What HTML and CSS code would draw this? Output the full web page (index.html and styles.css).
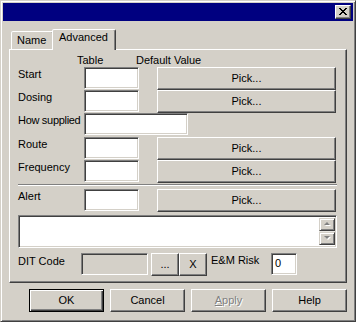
FILE: index.html
```html
<!DOCTYPE html>
<html lang="en">
<head>
    <meta charset="UTF-8">
    <title>Advanced</title>
    <link rel="stylesheet" href="styles.css">
</head>
<body>
    <div class="window">
        <div class="titlebar">
            <span class="close">
                <svg width="8" height="7" viewBox="0 0 8 7" shape-rendering="crispEdges"><path fill="#000" d="M0 0h2v1h-2z M6 0h2v1h-2z M1 1h2v1h-2z M5 1h2v1h-2z M2 2h4v1h-4z M3 3h2v1h-2z M2 4h4v1h-4z M1 5h2v1h-2z M5 5h2v1h-2z M0 6h2v1h-2z M6 6h2v1h-2z"/></svg>
            </span>
        </div>
        <div class="client">
            <div class="tabs">
                <div class="tab">Name</div>
                <div class="tab active">Advanced</div>
            </div>
            <div class="panel">
                <div class="header">
                    <span class="hdr-table">Table</span>
                    <span>Default Value</span>
                </div>
                <div class="row">
                    <span class="label">Start</span>
                    <span class="input table-input"></span>
                    <span class="btn pick">Pick...</span>
                </div>
                <div class="row">
                    <span class="label">Dosing</span>
                    <span class="input table-input"></span>
                    <span class="btn pick">Pick...</span>
                </div>
                <div class="row row-tall">
                    <span class="label narrow">How supplied</span>
                    <span class="input wide-input"></span>
                </div>
                <div class="row">
                    <span class="label">Route</span>
                    <span class="input table-input"></span>
                    <span class="btn pick">Pick...</span>
                </div>
                <div class="row">
                    <span class="label">Frequency</span>
                    <span class="input table-input"></span>
                    <span class="btn pick">Pick...</span>
                </div>
                <div class="sep"></div>
                <div class="row">
                    <span class="label">Alert</span>
                    <span class="input table-input"></span>
                    <span class="btn pick">Pick...</span>
                </div>
                <div class="memo">
                    <div class="memo-text"></div>
                    <div class="scroll">
                        <span class="scroll-btn">
                            <svg width="7" height="5" viewBox="0 0 7 5"><path fill="#fff" d="M4 1l3 3h-6z"/><path fill="#808080" d="M3 0l3 3h-6z"/></svg>
                        </span>
                        <span class="scroll-track"></span>
                        <span class="scroll-btn">
                            <svg width="7" height="5" viewBox="0 0 7 5"><path fill="#fff" d="M1 1h6l-3 3z"/><path fill="#808080" d="M0 0h6l-3 3z"/></svg>
                        </span>
                    </div>
                </div>
                <div class="row dit-row">
                    <span class="label dit-label">DIT Code</span>
                    <span class="input dit-input"></span>
                    <span class="btn small-btn dots">...</span>
                    <span class="btn small-btn">X</span>
                    <span class="label risk-label">E&amp;M Risk</span>
                    <span class="input risk-input">0</span>
                </div>
            </div>
            <div class="buttons">
                <span class="btn dlg-btn default">OK</span>
                <span class="btn dlg-btn">Cancel</span>
                <span class="btn dlg-btn disabled"><u>A</u>pply</span>
                <span class="btn dlg-btn">Help</span>
            </div>
        </div>
    </div>
</body>
</html>
```

FILE: styles.css
```css
* {
    box-sizing: border-box;
}
body {
    margin: 0;
    font-family: "Liberation Sans", Arial, sans-serif;
    font-size: 11px;
    line-height: 13px;
    color: #000;
    background: #d4d0c8;
}
.window {
    width: 356px;
    height: 322px;
    padding: 2px;
    background: #d4d0c8;
    border: 1px solid;
    border-color: #d4d0c8 #404040 #404040 #d4d0c8;
    box-shadow: inset 1px 1px #fff, inset -1px -1px #808080;
    display: flex;
    flex-direction: column;
}
.titlebar {
    height: 18px;
    background: #000080;
    display: flex;
    justify-content: flex-end;
    align-items: center;
    padding-right: 2px;
}
.close {
    width: 16px;
    height: 14px;
    background: #d4d0c8;
    border: 1px solid;
    border-color: #fff #404040 #404040 #fff;
    box-shadow: inset -1px -1px #808080;
    display: flex;
    justify-content: center;
    align-items: center;
    padding: 0 1px 1px 0;
}
.close svg {
    display: block;
}
.client {
    flex: 1;
    padding: 0 6px;
    display: flex;
    flex-direction: column;
}
.tabs {
    height: 20px;
    margin-top: 8px;
    padding-left: 2px;
    display: flex;
    align-items: flex-end;
}
.tab {
    width: 43px;
    height: 18px;
    padding: 2px 0 0 5px;
    background: #d4d0c8;
    border: 1px solid;
    border-bottom: 0;
    border-color: #fff #404040 transparent #fff;
    border-radius: 2px 2px 0 0;
    box-shadow: inset -1px 0 #808080;
}
.tab.active {
    position: relative;
    z-index: 1;
    width: 64px;
    height: 21px;
    margin: 0 -2px -1px -2px;
    padding: 1px 0 0 6px;
}
.panel {
    height: 234px;
    padding: 4px 9px 0 8px;
    border: 1px solid;
    border-color: #fff #404040 #404040 #fff;
    box-shadow: inset -1px -1px #808080;
}
.header {
    height: 13px;
    display: flex;
}
.hdr-table {
    width: 59px;
    margin-left: 59px;
}
.row {
    height: 23px;
    display: flex;
    align-items: flex-start;
}
.row-tall {
    height: 24px;
}
.label {
    width: 66px;
    padding-top: 1px;
    white-space: nowrap;
}
.narrow {
    letter-spacing: -0.3px;
}
.input {
    height: 22px;
    background: #fff;
    border: 1px solid;
    border-color: #808080 #fff #fff #808080;
    box-shadow: inset 1px 1px #404040, inset -1px -1px #d4d0c8;
}
.table-input {
    width: 55px;
}
.wide-input {
    width: 104px;
}
.btn {
    height: 23px;
    background: #d4d0c8;
    border: 1px solid;
    border-color: #fff #404040 #404040 #fff;
    box-shadow: inset -1px -1px #808080;
    display: flex;
    justify-content: center;
    align-items: center;
}
.pick {
    width: 179px;
    margin-left: 18px;
}
.sep {
    height: 2px;
    margin: 1px 0 3px;
    border-top: 1px solid #808080;
    border-bottom: 1px solid #fff;
}
.memo {
    height: 33px;
    margin-top: 3px;
    padding: 2px 1px 2px 2px;
    background: #fff;
    border: 1px solid;
    border-color: #808080 #fff #fff #808080;
    box-shadow: inset 1px 1px #404040, inset -1px -1px #d4d0c8;
    display: flex;
}
.memo-text {
    flex: 1;
}
.scroll {
    width: 16px;
    display: flex;
    flex-direction: column;
}
.scroll-btn {
    height: 13px;
    background: #d4d0c8;
    border: 1px solid;
    border-color: #d4d0c8 #404040 #404040 #d4d0c8;
    box-shadow: inset 1px 1px #fff, inset -1px -1px #808080;
    display: flex;
    justify-content: center;
    align-items: center;
}
.scroll-btn svg {
    display: block;
}
.scroll-track {
    flex: 1;
    background: #e8e6e1;
}
.dit-row {
    margin-top: 5px;
}
.dit-label {
    width: 63px;
    padding-top: 2px;
}
.dit-input {
    width: 67px;
    background: #d4d0c8;
}
.small-btn {
    width: 28px;
}
.dots {
    margin-left: 3px;
}
.risk-label {
    width: 60px;
    margin-left: 4px;
}
.risk-input {
    width: 26px;
    padding: 3px 0 0 3px;
}
.buttons {
    margin-top: 6px;
    display: flex;
    justify-content: flex-end;
    gap: 6px;
}
.dlg-btn {
    width: 75px;
}
.default {
    border-color: #000;
    box-shadow: inset 1px 1px #fff, inset -1px -1px #404040, inset -2px -2px #808080;
}
.disabled {
    color: #808080;
    text-shadow: 1px 1px #fff;
}
```
